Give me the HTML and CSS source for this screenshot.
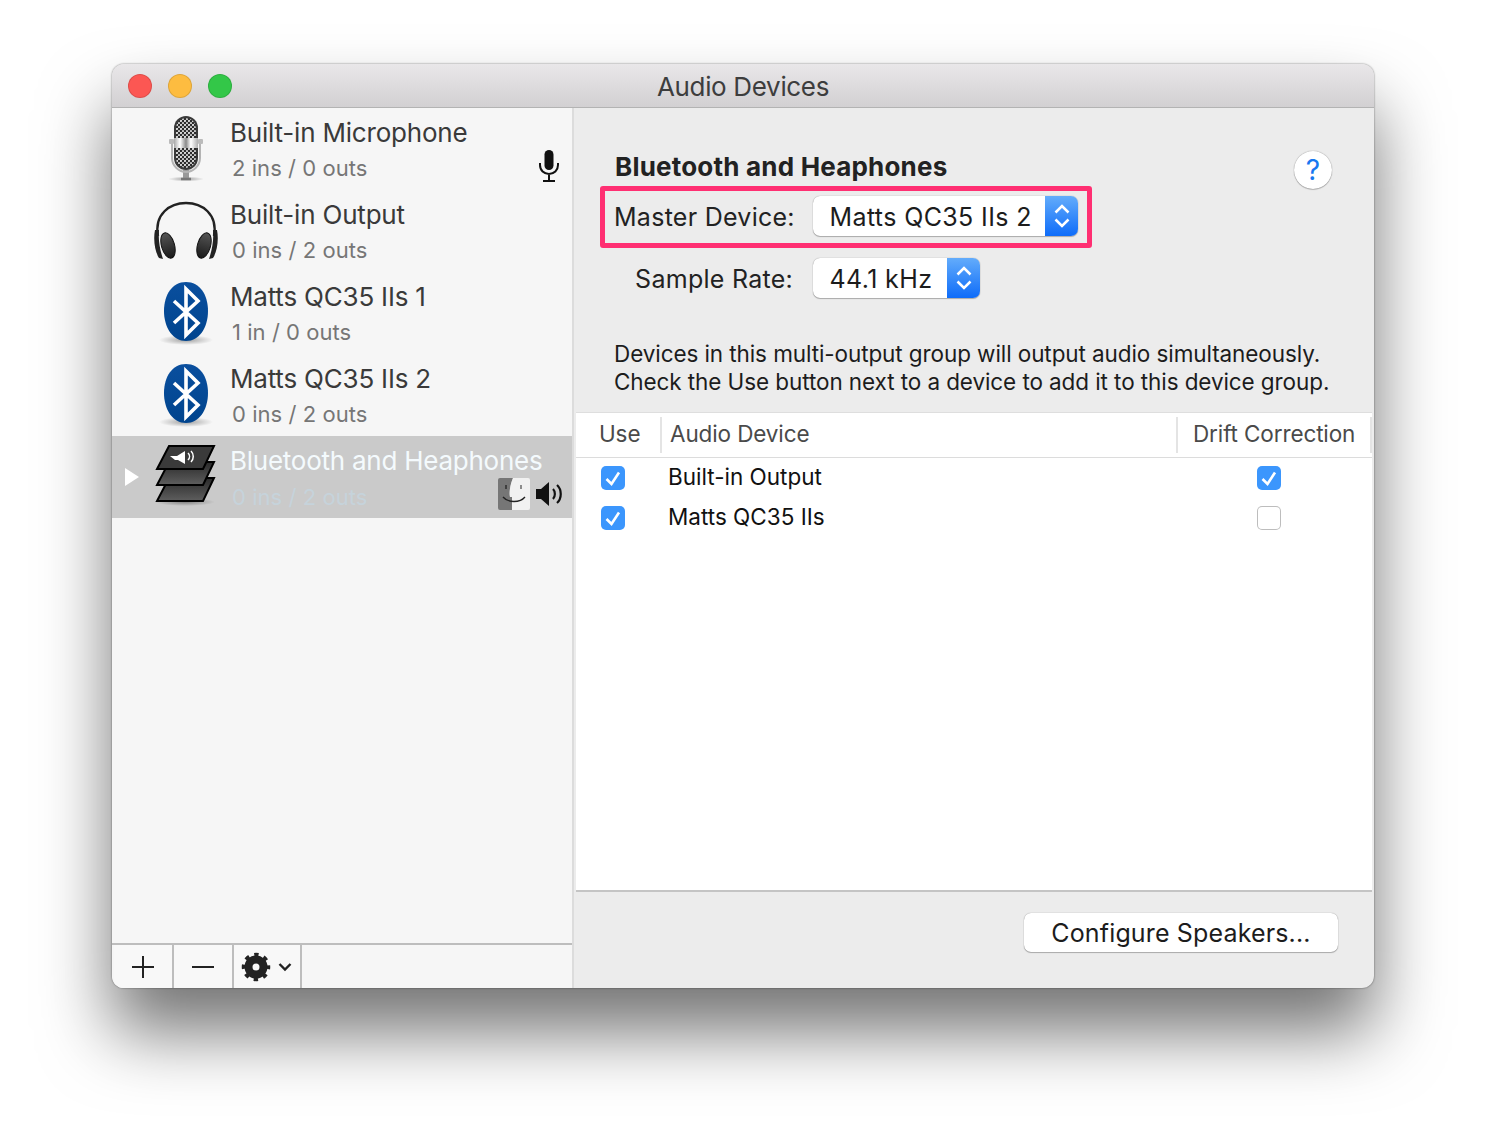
FILE: index.html
```html
<!DOCTYPE html>
<html lang="en">
<head>
<meta charset="utf-8">
<title>Audio Devices</title>
<link rel="stylesheet" href="styles.css">
</head>
<body>
<svg class="defs" width="0" height="0" aria-hidden="true">
  <defs>
    <pattern id="mesh" width="4" height="4" patternUnits="userSpaceOnUse">
      <rect width="4" height="4" fill="#2b2b2b"/>
      <circle cx="1" cy="1" r="1.1" fill="#e4e4e4"/>
      <circle cx="3" cy="3" r="1.1" fill="#d0d0d0"/>
    </pattern>
    <linearGradient id="band" x1="0" x2="1" y1="0" y2="0">
      <stop offset="0" stop-color="#a8a8a8"/><stop offset=".25" stop-color="#fff"/>
      <stop offset=".5" stop-color="#8a8a8a"/><stop offset=".7" stop-color="#fff"/><stop offset="1" stop-color="#b0b0b0"/>
    </linearGradient>
    <linearGradient id="cup" x1="0" x2="0" y1="0" y2="1">
      <stop offset="0" stop-color="#555"/><stop offset="1" stop-color="#1a1a1a"/>
    </linearGradient>
    <linearGradient id="egg" x1="0" x2="0" y1="0" y2="1">
      <stop offset="0" stop-color="#0a4f9e"/><stop offset="1" stop-color="#00448e"/>
    </linearGradient>
    <linearGradient id="plate" x1="0" x2="0" y1="0" y2="1">
      <stop offset="0" stop-color="#2a2a2a"/><stop offset="1" stop-color="#5e5e5e"/>
    </linearGradient>
    <radialGradient id="floor">
      <stop offset="0" stop-color="#000" stop-opacity=".35"/><stop offset="1" stop-color="#000" stop-opacity="0"/>
    </radialGradient>
    <symbol id="bt" viewBox="0 0 60 66">
      <ellipse cx="30" cy="60" rx="27" ry="5" fill="url(#floor)"/>
      <path d="M30 2C44 2 52 15 52 31C52 48 43 61 30 61C17 61 8 48 8 31C8 15 16 2 30 2Z" fill="url(#egg)"/>
      <path d="M18 21L42 43L30 55V9L42 21L18 43" fill="none" stroke="#fff" stroke-width="3.6"/>
    </symbol>
    <symbol id="updown" viewBox="0 0 16 30">
      <path d="M1.500 11.500L8 5L14.500 11.500M1.500 18.500L8 25L14.500 18.500" fill="none" stroke="#fff" stroke-width="2.500"/>
    </symbol>
    <symbol id="tick" viewBox="0 0 24 24">
      <path d="M5.500 13L10.500 18L18 6.500" fill="none" stroke="#fff" stroke-width="2.600"/>
    </symbol>
  </defs>
</svg>
<main class="window">
  <header class="titlebar">
    <div class="lights">
      <span class="light red"></span><span class="light yellow"></span><span class="light green"></span>
    </div>
    <h1 class="wintitle">Audio Devices</h1>
  </header>
  <div class="content">
    <aside class="sidebar">
      <ul class="devices">
        <li class="device">
          <span class="arrow-slot"></span>
          <span class="dev-icon">
            <svg width="60" height="66" viewBox="0 0 60 66">
              <ellipse cx="30" cy="63" rx="18" ry="2.500" fill="url(#floor)"/>
              <path d="M30 54V63" stroke="#999" stroke-width="6"/>
              <path d="M25 63h10" stroke="#777" stroke-width="2.500"/>
              <path d="M16 25V42C16 50 23 56 30 56C37 56 44 50 44 42V25" fill="none" stroke="#b4b4b4" stroke-width="2"/>
              <rect x="18" y="0" width="24" height="54" rx="12" fill="#3a3a3a"/>
              <rect x="20" y="2" width="20" height="50" rx="10" fill="url(#mesh)"/>
              <rect x="18" y="22" width="24" height="10" fill="url(#band)"/>
              <rect x="13" y="23" width="5" height="5" rx="1" fill="#bbb"/>
              <rect x="42" y="23" width="5" height="5" rx="1" fill="#bbb"/>
            </svg>
          </span>
          <div class="dev-text">
            <div class="dev-name">Built-in Microphone</div>
            <div class="dev-sub">2 ins / 0 outs</div>
          </div>
          <div class="badges">
            <svg width="24" height="34" viewBox="0 0 24 34">
              <rect x="7.500" y="1" width="9" height="20" rx="4.500" fill="#111"/>
              <path d="M3 14V16C3 21.500 7 25 12 25C17 25 21 21.500 21 16V14M12 25V31M6 32H18" fill="none" stroke="#111" stroke-width="2"/>
            </svg>
          </div>
        </li>
        <li class="device">
          <span class="arrow-slot"></span>
          <span class="dev-icon">
            <svg width="66" height="62" viewBox="0 0 66 62">
              <path d="M5 36C1 14 17 3 33 3C49 3 65 14 61 36" fill="none" stroke="#222" stroke-width="2.400"/>
              <path d="M2 30C0 40 2 52 6 58L10 59C7 50 5 40 6 30Z" fill="#222"/>
              <path d="M64 30C66 40 64 52 60 58L56 59C59 50 61 40 60 30Z" fill="#222"/>
              <ellipse cx="15" cy="45.500" rx="6.500" ry="13" transform="rotate(-16 15 45.500)" fill="url(#cup)" stroke="#111"/>
              <ellipse cx="51" cy="45.500" rx="6.500" ry="13" transform="rotate(16 51 45.500)" fill="url(#cup)" stroke="#111"/>
            </svg>
          </span>
          <div class="dev-text">
            <div class="dev-name">Built-in Output</div>
            <div class="dev-sub">0 ins / 2 outs</div>
          </div>
        </li>
        <li class="device">
          <span class="arrow-slot"></span>
          <span class="dev-icon"><svg width="60" height="66"><use href="#bt"/></svg></span>
          <div class="dev-text">
            <div class="dev-name">Matts QC35 IIs 1</div>
            <div class="dev-sub">1 in / 0 outs</div>
          </div>
        </li>
        <li class="device">
          <span class="arrow-slot"></span>
          <span class="dev-icon"><svg width="60" height="66"><use href="#bt"/></svg></span>
          <div class="dev-text">
            <div class="dev-name">Matts QC35 IIs 2</div>
            <div class="dev-sub">0 ins / 2 outs</div>
          </div>
        </li>
        <li class="device selected">
          <span class="arrow-slot"><span class="arrow"></span></span>
          <span class="dev-icon">
            <svg width="66" height="66" viewBox="0 0 66 66">
              <ellipse cx="32" cy="58" rx="30" ry="4" fill="url(#floor)"/>
              <path d="M16 34H61L50 57H4Z" fill="url(#plate)" stroke="#000" stroke-width="2"/>
              <path d="M16 18H61L50 41H4Z" fill="url(#plate)" stroke="#000" stroke-width="2"/>
              <path d="M16 2H61L50 25H4Z" fill="#3a3a3a" stroke="#000" stroke-width="2"/>
              <path d="M17 12H24L32 7V20L25 16H22Z" fill="#fff"/>
              <path d="M35 9C37 11 37 14 35 16M38 7C41 10 41 15 38 18" fill="none" stroke="#fff" stroke-width="1.500"/>
            </svg>
          </span>
          <div class="dev-text">
            <div class="dev-name">Bluetooth and Heaphones</div>
            <div class="dev-sub">0 ins / 2 outs</div>
          </div>
          <div class="badges">
            <svg width="32" height="32" viewBox="0 0 32 32">
              <path d="M0 2a2 2 0 0 1 2-2H15C12 7 11 15 12 19H14V32H2a2 2 0 0 1-2-2Z" fill="#767676"/>
              <path d="M15 0H30a2 2 0 0 1 2 2V30a2 2 0 0 1-2 2H14V19H12C11 15 12 7 15 0Z" fill="#f1f1f1"/>
              <path d="M5 19C10 25 22 25 27 19" fill="none" stroke="#222" stroke-width="1.300"/>
              <path d="M8 7V11" stroke="#222" stroke-width="1.300"/>
              <path d="M23 7V11" stroke="#555" stroke-width="1.300"/>
            </svg>
            <svg width="29" height="26" viewBox="0 0 29 26">
              <path d="M0 8H5L13 1V25L5 18H0Z" fill="#111"/>
              <path d="M17 8C19.500 10.500 19.500 15.500 17 18M21 4C26 8.500 26 17.500 21 22" fill="none" stroke="#111" stroke-width="2.200"/>
            </svg>
          </div>
        </li>
      </ul>
      <div class="toolbar">
        <div class="tool tool-add">
          <svg width="24" height="24" viewBox="0 0 24 24"><path d="M12 1V23M1 12H23" stroke="#222" stroke-width="2"/></svg>
        </div>
        <div class="tool tool-remove">
          <svg width="24" height="24" viewBox="0 0 24 24"><path d="M1 12H23" stroke="#222" stroke-width="2"/></svg>
        </div>
        <div class="tool tool-gear">
          <svg width="30" height="30" viewBox="0 0 30 30">
            <circle cx="15" cy="15" r="7.500" fill="none" stroke="#222" stroke-width="8"/>
            <circle cx="15" cy="15" r="12.500" fill="none" stroke="#222" stroke-width="3.500" stroke-dasharray="4.4 5.42" stroke-dashoffset="2.2"/>
          </svg>
          <svg width="14" height="10" viewBox="0 0 14 10"><path d="M1.500 2L7 7.500L12.500 2" fill="none" stroke="#222" stroke-width="2.400"/></svg>
        </div>
      </div>
    </aside>
    <section class="panel">
      <div class="panel-head">
        <h2 class="panel-title">Bluetooth and Heaphones</h2>
        <div class="help">?</div>
      </div>
      <div class="form-row master">
        <span class="form-label">Master Device:</span>
        <div class="select select-wide">
          <span class="select-value">Matts QC35 IIs 2</span>
          <span class="select-btn"><svg width="16" height="30"><use href="#updown"/></svg></span>
        </div>
      </div>
      <div class="form-row rate">
        <span class="form-label">Sample Rate:</span>
        <div class="select select-narrow">
          <span class="select-value">44.1 kHz</span>
          <span class="select-btn"><svg width="16" height="30"><use href="#updown"/></svg></span>
        </div>
      </div>
      <p class="desc">Devices in this multi-output group will output audio simultaneously.<br>Check the Use button next to a device to add it to this device group.</p>
      <div class="table">
        <div class="thead">
          <div class="th th-use">Use</div>
          <div class="th th-dev">Audio Device</div>
          <div class="th th-drift">Drift Correction</div>
        </div>
        <div class="tr">
          <div class="td-use"><span class="check on"><svg width="24" height="24"><use href="#tick"/></svg></span></div>
          <div class="td-dev">Built-in Output</div>
          <div class="td-drift"><span class="check on"><svg width="24" height="24"><use href="#tick"/></svg></span></div>
        </div>
        <div class="tr">
          <div class="td-use"><span class="check on"><svg width="24" height="24"><use href="#tick"/></svg></span></div>
          <div class="td-dev">Matts QC35 IIs</div>
          <div class="td-drift"><span class="check"></span></div>
        </div>
      </div>
      <div class="panel-foot">
        <div class="btn">Configure Speakers...</div>
      </div>
    </section>
  </div>
</main>
</body>
</html>
```

FILE: styles.css
```css
* { box-sizing: border-box; }
html, body { height: 100%; }
body {
  margin: 0;
  padding: 64px 112px 0;
  background: #fff;
  font-family: Inter, "Noto Sans", sans-serif;
  overflow: hidden;
}
.defs { position: absolute; }
.window {
  width: 1262px;
  height: 924px;
  border-radius: 12px;
  display: flex;
  flex-direction: column;
  box-shadow: 0 44px 70px rgba(0,0,0,.55), 0 0 2px rgba(0,0,0,.55);
  overflow: hidden;
  background: #ececec;
}
.titlebar {
  height: 44px;
  flex: none;
  display: flex;
  align-items: center;
  background: linear-gradient(#e9e7e9, #d2d0d2);
  border-bottom: 1px solid #b3b3b3;
  position: relative;
}
.lights { display: flex; gap: 16px; padding-left: 16px; }
.light { width: 24px; height: 24px; border-radius: 50%; border: 1px solid rgba(0,0,0,.12); }
.red { background: #fc5753; }
.yellow { background: #fdbc40; }
.green { background: #33c748; }
.wintitle {
  position: absolute;
  left: 0; right: 0; top: 0;
  margin: 0;
  text-align: center;
  font-size: 26px;
  font-weight: 400;
  line-height: 46px;
  color: #3d3d3d;
  letter-spacing: -.33px;
}
.content { flex: 1; display: flex; min-height: 0; }
.sidebar {
  width: 462px;
  flex: none;
  display: flex;
  flex-direction: column;
  background: #f6f6f6;
  border-right: 2px solid #dcdcdc;
}
.devices { list-style: none; margin: 0; padding: 0; flex: 1; }
.device { height: 82px; display: flex; }
.device.selected { background: #cacaca; }
.arrow-slot { width: 34px; flex: none; display: flex; align-items: center; padding: 0 0 0 13px; }
.arrow {
  width: 0; height: 0;
  border-left: 14px solid #fff;
  border-top: 9px solid transparent;
  border-bottom: 9px solid transparent;
}
.dev-icon { width: 80px; flex: none; display: flex; align-items: center; justify-content: center; }
.dev-text { flex: 1; min-width: 0; padding: 8px 0 0 4px; }
.dev-name { font-size: 26px; line-height: 34px; color: #3a3a3a; letter-spacing: -.2px; white-space: nowrap; }
.dev-sub { font-size: 22px; line-height: 34px; margin-top: 1px; color: #767676; padding-left: 2px; white-space: nowrap; letter-spacing: .05px; }
.selected .dev-name { color: #f4fafd; letter-spacing: -.25px; }
.selected .dev-sub { color: #c6d3db; margin-top: 2px; }
.badges { flex: none; align-self: flex-end; display: flex; align-items: center; gap: 6px; padding: 0 7px 8px 0; }
.device:first-child .badges { padding: 0 11px 7px 0; }
.toolbar {
  height: 45px;
  flex: none;
  display: flex;
  border-top: 2px solid #bdbdbd;
  padding-left: 2px;
}
.tool {
  display: flex;
  align-items: center;
  justify-content: center;
  background: #f8f8f8;
  border-right: 2px solid #bdbdbd;
}
.tool-add { width: 60px; }
.tool-remove { width: 60px; }
.tool-gear { width: 68px; justify-content: flex-start; padding-left: 7px; gap: 7px; }
.panel { flex: 1; min-width: 0; display: flex; flex-direction: column; padding-top: 40px; }
.panel-head { height: 38px; flex: none; display: flex; justify-content: space-between; padding: 0 42px 0 41px; }
.panel-title { margin: 0; font-size: 26px; line-height: 38px; font-weight: 700; color: #222; letter-spacing: .2px; white-space: nowrap; }
.help {
  width: 38px; height: 38px;
  margin-top: 3px;
  border-radius: 50%;
  background: #fff;
  box-shadow: 0 0 1px rgba(0,0,0,.5), 0 1px 1px rgba(0,0,0,.2);
  color: #1878f0;
  font-size: 28px;
  line-height: 38px;
  text-align: center;
}
.form-row { display: flex; align-items: center; flex: none; }
.master {
  width: 492px;
  height: 62px;
  margin-left: 26px;
  border: 5px solid #ff2f72;
  border-radius: 3px;
  padding: 0 0 2px 9px;
}
.master .form-label { width: 179px; margin-right: 20px; }
.rate { height: 40px; margin-top: 10px; margin-left: 26px; padding-left: 14px; }
.rate .form-label { width: 179px; margin-right: 20px; }
.form-label { font-size: 25px; line-height: 40px; padding-top: 2px; color: #222; text-align: right; white-space: nowrap; letter-spacing: .27px; }
.select {
  height: 40px;
  display: flex;
  align-items: stretch;
  background: #fff;
  border-radius: 7px;
  box-shadow: 0 0 1px rgba(0,0,0,.45), 0 1px 1px rgba(0,0,0,.25);
  overflow: hidden;
}
.select-wide { width: 265px; }
.select-narrow { width: 167px; }
.select-value { flex: 1; padding-left: 16.500px; font-size: 25px; line-height: 42px; color: #1c1c1c; white-space: nowrap; letter-spacing: .38px; }
.select-btn {
  width: 33px;
  display: flex;
  align-items: center;
  justify-content: center;
  background: linear-gradient(#63acfb, #0e6cf9);
}
.desc { margin: 42px 0 0 40px; font-size: 22.500px; line-height: 28px; color: #1c1c1c; white-space: nowrap; letter-spacing: -.09px; flex: none; }
.table {
  flex: 1;
  margin: 16px 2px 0;
  background: #fff;
  border-top: 1px solid #dedede;
  border-bottom: 2px solid #c4c4c4;
}
.thead { height: 45px; display: flex; border-bottom: 1px solid #dcdcdc; padding: 4px 0; }
.th { font-size: 22.500px; line-height: 34px; color: #4a4a4a; border-right: 2px solid #e4e4e4; white-space: nowrap; letter-spacing: -.12px; }
.th-use { width: 86px; padding-left: 23px; }
.th-dev { width: 516px; padding-left: 8px; }
.th-drift { width: 194px; padding-left: 15px; }
.tr { height: 40px; display: flex; align-items: center; }
.td-use { width: 92px; padding-left: 25px; display: flex; }
.td-dev { flex: 1; font-size: 22.500px; color: #111; white-space: nowrap; padding-bottom: 4px; }
.td-drift { width: 115px; display: flex; }
.check {
  width: 24px; height: 24px;
  border-radius: 5px;
  background: #fff;
  box-shadow: inset 0 0 0 1px #bdbdbd;
  display: block;
}
.check.on { background: #3b96fd; box-shadow: none; }
.panel-foot { height: 96px; flex: none; display: flex; justify-content: flex-end; padding: 21px 36px 0 0; }
.btn {
  width: 314px;
  height: 39px;
  background: #fff;
  border-radius: 7px;
  box-shadow: 0 0 1px rgba(0,0,0,.45), 0 1px 1px rgba(0,0,0,.25);
  font-size: 25px;
  line-height: 40px;
  text-align: center;
  color: #1c1c1c;
  letter-spacing: .15px;
  white-space: nowrap;
}
```
